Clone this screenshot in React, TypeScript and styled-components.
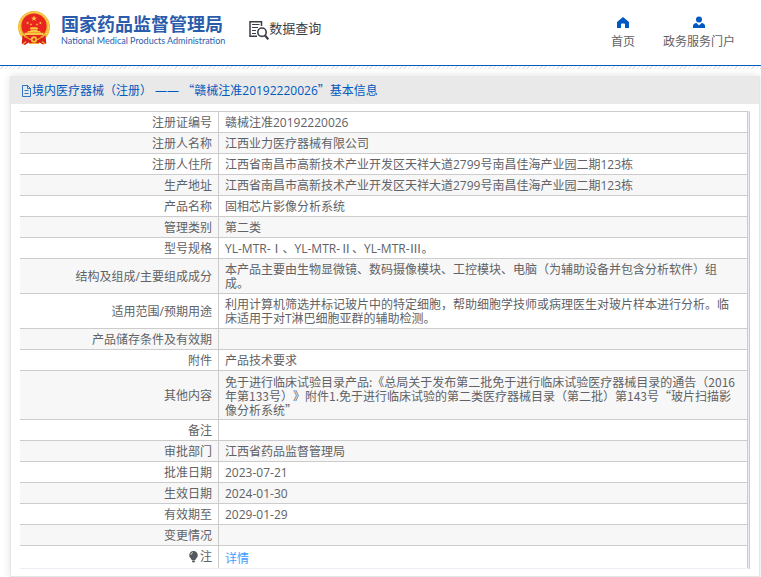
import React from "react";
import styled, { createGlobalStyle } from "styled-components";

const GlobalStyle = createGlobalStyle`
  body {
    margin: 0;
    background: #ffffff;
    color: #606266;
    font-family: "Open Sans", "Noto Sans CJK SC", sans-serif;
    font-size: 12px;
    line-height: 14px;
    text-spacing-trim: space-all;
  }
  *, *::before, *::after { box-sizing: border-box; }
`;

const Header = styled.header`
  display: flex;
  align-items: flex-start;
  height: 66px;
  padding: 0 26px 0 18px;
  border-bottom: 1px solid #0059bd;
`;

const Hatch = styled.div`
  height: 3px;
  background: repeating-linear-gradient(135deg, #ffffff 0 2px, #e6e6e6 2px 3px);
`;

const Brand = styled.a`
  display: flex;
  gap: 10px;
  padding-top: 10px;
  color: #2b5cab;
  text-decoration: none;
`;

const BrandText = styled.span`
  display: flex;
  flex-direction: column;
  padding-top: 3px;
`;

const BrandName = styled.strong`
  font-family: "Noto Sans CJK SC", sans-serif;
  font-size: 18px;
  line-height: 20px;
  white-space: nowrap;
`;

const BrandLatin = styled.span`
  font-family: Lato, sans-serif;
  font-size: 9px;
  font-weight: 400;
  line-height: 16px;
  white-space: nowrap;
`;

const Section = styled.h1`
  display: flex;
  align-items: flex-start;
  margin: 0;
  padding: 20px 0 0 24px;
  color: #3d3d46;
  font-size: 13px;
  font-weight: 400;
  line-height: 17px;
  white-space: nowrap;
`;

const Nav = styled.nav`
  display: flex;
  gap: 28px;
  margin-left: auto;
  padding-top: 16px;
`;

const NavLink = styled.a`
  display: flex;
  flex-direction: column;
  align-items: center;
  gap: 6px;
  color: #606266;
  line-height: 14px;
  text-decoration: none;
  white-space: nowrap;

  svg { fill: #0059c2; }
`;

const Panel = styled.main`
  margin: 7px 1px 0 10px;
  border: 1px solid #e6e6e6;
  border-top: 0;
  box-shadow: 0 0 8px rgba(0, 0, 0, 0.12);
`;

const PanelTitle = styled.h2`
  display: flex;
  align-items: center;
  height: 28px;
  margin: 0;
  padding: 1px 10px 0;
  background: #e9e9e9;
  color: #0059bd;
  font-size: 12px;
  font-weight: 400;
  white-space: pre;
`;

const TableFrame = styled.div`
  margin: 7px 9px;
  border-right: 1px solid #cccccc;
  background: #ebeef5;
  padding-right: 1px;
`;

const RecordTable = styled.table`
  width: 100%;
  border-collapse: separate;
  border-spacing: 0;
  table-layout: fixed;
  background: #ffffff;
  border-bottom: 1px solid #ebeef5;
`;

const Row = styled.tr`
  &:nth-child(even) { background: #f7f7f7; }
`;

const Label = styled.th`
  width: 199px;
  padding: 4px 6px 2px 0;
  border-top: 1px solid #cccccc;
  border-right: 1px solid #cccccc;
  font-weight: 400;
  text-align: right;
  vertical-align: middle;
`;

const Value = styled.td<{ $tall?: boolean; $wideQuotes?: boolean }>`
  height: ${(p) => (p.$tall ? 23 : 21)}px;
  padding: ${(p) => (p.$tall ? "6px 7px 2px 6px" : "4px 7px 2px 6px")};
  border-top: 1px solid #cccccc;
  border-right: 1px solid #cccccc;
  font-family: ${(p) =>
    p.$wideQuotes ? '"Noto Sans CJK SC", sans-serif' : "inherit"};
`;

const WideQuote = styled.span`
  font-family: "Noto Sans CJK SC", sans-serif;
`;

const NoteLabel = styled.span`
  display: inline-flex;
  align-items: center;
  gap: 2px;
`;

const DetailLink = styled.a`
  color: #409eff;
  text-decoration: none;
`;

const star = (cx: number, cy: number, r: number) =>
  Array.from({ length: 10 }, (_, i) => {
    const a = (Math.PI / 5) * i - Math.PI / 2;
    const d = i % 2 ? r * 0.42 : r;
    return `${cx + d * Math.cos(a)},${cy + d * Math.sin(a)}`;
  }).join(" ");

const Emblem = () => (
  <svg width="33" height="36" viewBox="0 0 33 36" aria-hidden="true">
    <circle cx="16" cy="17" r="16" fill="#f0b735" />
    <circle cx="16" cy="17" r="14.6" fill="none" stroke="#fbd65c" strokeWidth="1.2" strokeDasharray="2 1" />
    <circle cx="16" cy="16" r="12.6" fill="#e8251f" />
    <g fill="#f9c842">
      <polygon points={star(16, 8.6, 3)} />
      <polygon points={star(9.6, 13, 1.6)} />
      <polygon points={star(13, 14.4, 1.5)} />
      <polygon points={star(19, 14.4, 1.5)} />
      <polygon points={star(22.4, 13, 1.6)} />
      <path d="M11.5 19 13 17.2h6l1.5 1.8zM12.5 19.5h7v1.8h-7zM10 21h12l1 1.5H9zM6.5 22.7h19V25h-19z" />
    </g>
    <path d="M4.5 25.5 9 27h14l4.5-1.5.8 8-3.3 1-3.5-2-2.5 1.5h-6l-2.5-1.5L7 35l-3.3-1.5z" fill="#d91f1b" />
    <path d="M6 26.5c4 1 5.500 3 7.500 3.500M26 26.500c-4 1-5.500 3-7.500 3.500M5 34l3-2.500M27 34l-3-2.500" fill="none" stroke="#f3b02f" strokeWidth="1.2" />
    <circle cx="16" cy="29.5" r="3.2" fill="#f6bf3a" />
    <circle cx="16" cy="29.5" r="1.3" fill="#e8251f" />
    <path d="M11 33.5h10" stroke="#f3b02f" />
  </svg>
);

const SearchDocIcon = () => (
  <svg width="20" height="21" viewBox="0 0 20 21" fill="none" stroke="#3d3d46" aria-hidden="true">
    <path d="M12.5 6V1.7H1v14.6h7" strokeWidth="1.5" />
    <path d="M3 4.5h7.5M3 7.5h6M3 10.5h4M3 13.5h4" strokeWidth="1" />
    <circle cx="13" cy="12.2" r="4.2" strokeWidth="1.6" />
    <path d="m16 15.5 3.3 3.8" strokeWidth="2.2" />
  </svg>
);

const HomeIcon = () => (
  <svg width="14" height="13" viewBox="0 0 14 13" aria-hidden="true">
    <path d="M7 1 1 6v6h4V8.5a1 1 0 0 1 1-1h2a1 1 0 0 1 1 1V12h4V6z" />
  </svg>
);

const UserIcon = () => (
  <svg width="14" height="13" viewBox="0 0 14 13" aria-hidden="true">
    <circle cx="7" cy="3.5" r="3" />
    <path d="M1 12V9.8C1 8.3 2.5 7.3 4.5 7L7 9.5 9.5 7c2 .3 3.5 1.3 3.5 2.8V12z" />
  </svg>
);

const DocIcon = () => (
  <svg width="11" height="12" viewBox="0 0 11 12" fill="none" stroke="#0059bd" strokeWidth=".8" aria-hidden="true">
    <path d="M6.5.5h-5v11h8v-8zM6.5.5v3h3M3.5 5.5h4M3.5 8.5h4" />
  </svg>
);

const BulbIcon = () => (
  <svg width="9" height="12" viewBox="0 0 9 12" fill="#55585e" aria-hidden="true">
    <path d="M4.5 0A4.3 4.3 0 0 0 .2 4.3C.2 6.5 2 7.2 2.7 9h3.6c.7-1.8 2.5-2.5 2.5-4.7A4.3 4.3 0 0 0 4.5 0zM3 9.6h3v1l-1 .9H4l-1-.9z" />
    <path d="M1.8 4A2.6 2.6 0 0 1 4 1.6" fill="none" stroke="#ffffff" strokeWidth=".7" />
  </svg>
);

const records: [string, string][] = [
  ["注册证编号", "赣械注准20192220026"],
  ["注册人名称", "江西业力医疗器械有限公司"],
  ["注册人住所", "江西省南昌市高新技术产业开发区天祥大道2799号南昌佳海产业园二期123栋"],
  ["生产地址", "江西省南昌市高新技术产业开发区天祥大道2799号南昌佳海产业园二期123栋"],
  ["产品名称", "固相芯片影像分析系统"],
  ["管理类别", "第二类"],
  ["型号规格", "YL-MTR-Ⅰ、YL-MTR-Ⅱ、YL-MTR-Ⅲ。"],
  ["结构及组成/主要组成成分", "本产品主要由生物显微镜、数码摄像模块、工控模块、电脑（为辅助设备并包含分析软件）组成。"],
  ["适用范围/预期用途", "利用计算机筛选并标记玻片中的特定细胞，帮助细胞学技师或病理医生对玻片样本进行分析。临床适用于对T淋巴细胞亚群的辅助检测。"],
  ["产品储存条件及有效期", ""],
  ["附件", "产品技术要求"],
  ["其他内容", "免于进行临床试验目录产品:《总局关于发布第二批免于进行临床试验医疗器械目录的通告（2016年第133号）》附件1.免于进行临床试验的第二类医疗器械目录（第二批）第143号“玻片扫描影像分析系统”"],
  ["备注", ""],
  ["审批部门", "江西省药品监督管理局"],
  ["批准日期", "2023-07-21"],
  ["生效日期", "2024-01-30"],
  ["有效期至", "2029-01-29"],
  ["变更情况", ""],
];

export default function App() {
  return (
    <>
      <GlobalStyle />
      <Header>
        <Brand href="#">
          <Emblem />
          <BrandText>
            <BrandName>国家药品监督管理局</BrandName>
            <BrandLatin>National Medical Products Administration</BrandLatin>
          </BrandText>
        </Brand>
        <Section>
          <SearchDocIcon />
          数据查询
        </Section>
        <Nav>
          <NavLink href="#">
            <HomeIcon />
            首页
          </NavLink>
          <NavLink href="#">
            <UserIcon />
            政务服务门户
          </NavLink>
        </Nav>
      </Header>
      <Hatch />
      <Panel>
        <PanelTitle>
          <DocIcon />
          <span>
            境内医疗器械（注册） —— <WideQuote>“</WideQuote>赣械注准20192220026<WideQuote>”</WideQuote>基本信息
          </span>
        </PanelTitle>
        <TableFrame>
          <RecordTable>
            <tbody>
              {records.map(([label, value]) => (
                <Row key={label}>
                  <Label scope="row">{label}</Label>
                  <Value $wideQuotes={value.includes("“")}>{value}</Value>
                </Row>
              ))}
              <Row>
                <Label scope="row">
                  <NoteLabel>
                    <BulbIcon />注
                  </NoteLabel>
                </Label>
                <Value $tall>
                  <DetailLink href="#">详情</DetailLink>
                </Value>
              </Row>
            </tbody>
          </RecordTable>
        </TableFrame>
      </Panel>
    </>
  );
}
